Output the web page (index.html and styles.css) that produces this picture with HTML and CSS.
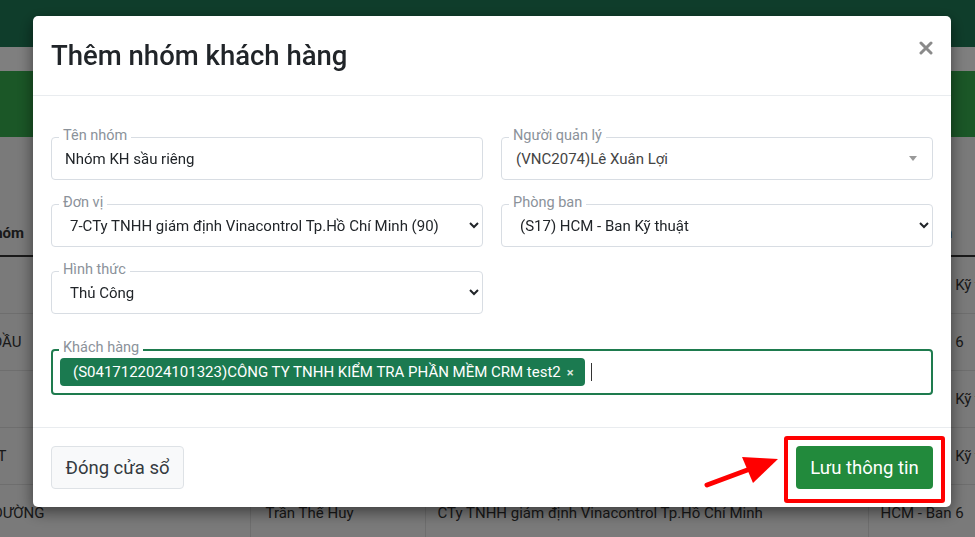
FILE: index.html
```html
<!DOCTYPE html>
<html lang="vi">
<head>
    <meta charset="UTF-8">
    <meta name="viewport" content="width=device-width, initial-scale=1.0">
    <title>Nhóm khách hàng</title>
    <link rel="stylesheet" href="styles.css">
</head>
<body>
    <div class="page">
        <div class="topbar"></div>
        <div class="strip"></div>
        <div class="banner"></div>
        <div class="list">
            <table class="grid">
                <colgroup>
                    <col class="c1"><col class="c2"><col class="c3"><col class="c4">
                </colgroup>
                <thead>
                    <tr><th class="name">Tên nhóm</th><th>Người quản lý</th><th>Đơn vị</th><th>Phòng ban</th></tr>
                </thead>
                <tbody>
                    <tr><td class="name"></td><td>Lê Xuân Lợi</td><td>CTy TNHH giám định Vinacontrol Tp.Hồ Chí Minh</td><td>HCM - Ban Kỹ thuật</td></tr>
                    <tr><td class="name mid">NHÓM SẦU RIÊNG ĐẦU</td><td>Trần Thế Huy</td><td>CTy TNHH giám định Vinacontrol Tp.Hồ Chí Minh</td><td>HCM - Ban 6</td></tr>
                    <tr><td class="name"></td><td>Lê Xuân Lợi</td><td>CTy TNHH giám định Vinacontrol Tp.Hồ Chí Minh</td><td>HCM - Ban Kỹ thuật</td></tr>
                    <tr><td class="name short">NHÓM KH THÂN THIẾT</td><td>Lê Xuân Lợi</td><td>CTy TNHH giám định Vinacontrol Tp.Hồ Chí Minh</td><td>HCM - Ban Kỹ thuật</td></tr>
                    <tr><td class="name long">NHÓM KH MẶT ĐƯỜNG</td><td>Trần Thế Huy</td><td>CTy TNHH giám định Vinacontrol Tp.Hồ Chí Minh</td><td>HCM - Ban 6</td></tr>
                </tbody>
            </table>
        </div>
    </div>

    <div class="backdrop">
        <div class="modal">
            <div class="modal-header">
                <h2>Thêm nhóm khách hàng</h2>
                <button class="close" type="button">
                    <svg width="14" height="14" viewBox="0 0 14 14"><path d="M2 2L12 12M12 2L2 12" stroke="#8a8a8a" stroke-width="3" stroke-linecap="round"/></svg>
                </button>
            </div>

            <div class="modal-body">
                <div class="form-grid">
                    <div class="field">
                        <label>Tên nhóm</label>
                        <input class="control" type="text" value="Nhóm KH sầu riêng">
                    </div>
                    <div class="field">
                        <label>Người quản lý</label>
                        <div class="control combo">
                            <span>(VNC2074)Lê Xuân Lợi</span>
                            <b class="combo-arrow"></b>
                        </div>
                    </div>
                    <div class="field">
                        <label>Đơn vị</label>
                        <select class="control">
                            <option>7-CTy TNHH giám định Vinacontrol Tp.Hồ Chí Minh (90)</option>
                        </select>
                    </div>
                    <div class="field">
                        <label>Phòng ban</label>
                        <select class="control">
                            <option>(S17) HCM - Ban Kỹ thuật</option>
                        </select>
                    </div>
                    <div class="field">
                        <label>Hình thức</label>
                        <select class="control">
                            <option>Thủ Công</option>
                        </select>
                    </div>
                    <div></div>
                    <div class="field wide">
                        <label>Khách hàng</label>
                        <div class="tag-box">
                            <span class="tag">(S0417122024101323)CÔNG TY TNHH KIỂM TRA PHẦN MỀM CRM test2 <i>×</i></span>
                            <span class="cursor"></span>
                        </div>
                    </div>
                </div>
            </div>

            <div class="modal-footer">
                <button class="btn btn-light" type="button">Đóng cửa sổ</button>
                <button class="btn btn-save" type="button">Lưu thông tin</button>
                <!-- chú thích hướng dẫn -->
                <div class="mark"></div>
                <svg class="pointer" width="90" height="45" viewBox="0 0 90 45">
                    <path d="M7 35L50 19" stroke="#f00" stroke-width="5" stroke-linecap="round"/>
                    <polygon points="78,9 42,7 53,33" fill="#f00"/>
                </svg>
            </div>
        </div>
    </div>
</body>
</html>
```

FILE: styles.css
```css
body {
    margin: 0;
    font-family: Roboto, "Liberation Sans", sans-serif;
    background: #f4f4f4;
    overflow: hidden;
}
.topbar {
    height: 47px;
    background: #1f7b57;
}
.strip {
    height: 24px;
    background: #ffffff;
}
.banner {
    height: 66px;
    background: #36ae4e;
}
.list {
    padding-top: 73px;
    overflow: hidden;
}
.grid {
    width: 1168px;
    table-layout: fixed;
    border-collapse: collapse;
    font-size: 15px;
    color: #333;
}
.grid .c1 { width: 250px; }
.grid .c2 { width: 175px; }
.grid .c3 { width: 443px; }
.grid .c4 { width: 300px; }
.grid th {
    height: 45px;
    text-align: left;
    font-weight: 700;
    padding: 0 12px;
    border-bottom: 2px solid #333;
    white-space: nowrap;
}
.grid td {
    height: 56px;
    padding: 0 12px;
    border-bottom: 1px solid #dcdcdc;
    border-left: 1px solid #dcdcdc;
    white-space: nowrap;
    overflow: hidden;
}
.grid td:nth-child(2) { padding-left: 15px; }
/* cột đầu bị cuộn ngang, chỉ thấy đuôi chữ */
.grid .name {
    direction: rtl;
    text-align: right;
    padding-left: 0;
    padding-right: 226px;
    border-left: none;
}
.grid td.mid { padding-right: 228px; }
.grid td.short { padding-right: 243px; }
.grid td.long { padding-right: 205px; }

.backdrop {
    position: fixed;
    top: 0;
    left: 0;
    right: 0;
    bottom: 0;
    background: rgba(0, 0, 0, 0.5);
    padding: 16px 0 0 33px;
}
.modal {
    width: 918px;
    height: 491px;
    background: #fff;
    border-radius: 5px;
    box-shadow: 0 5px 15px rgba(0, 0, 0, 0.5);
    display: flex;
    flex-direction: column;
}
.modal-header {
    height: 80px;
    box-sizing: border-box;
    border-bottom: 1px solid #e9ecef;
    padding: 0 18px;
    display: flex;
    align-items: center;
    justify-content: space-between;
}
.modal-header h2 {
    margin: 0;
    font-size: 27.5px;
    font-weight: 500;
    color: #212529;
}
.close {
    align-self: flex-start;
    margin-top: 25px;
    padding: 0;
    border: none;
    background: none;
    width: 14px;
    height: 14px;
    cursor: pointer;
}
.close svg { display: block; }

.modal-body {
    flex: 1;
    padding: 41px 18px 0;
}
.form-grid {
    display: grid;
    grid-template-columns: 1fr 1fr;
    column-gap: 18px;
    row-gap: 24px;
}
.field {
    position: relative;
}
.field.wide {
    grid-column: 1 / 3;
    margin-top: 11px;
}
.field label {
    position: absolute;
    left: 8px;
    top: -10px;
    padding: 0 4px;
    background: #fff;
    font-size: 14.5px;
    line-height: 18px;
    color: #8b929a;
}
.control {
    display: block;
    width: 100%;
    height: 43px;
    box-sizing: border-box;
    border: 1px solid #d8dde3;
    border-radius: 4px;
    background: #fff;
    font-family: Roboto, "Liberation Sans", sans-serif;
    font-size: 15px;
    color: #212529;
    padding: 0 13px;
    outline: none;
}
select.control {
    padding: 0 10px 0 14px;
}
.combo {
    display: flex;
    align-items: center;
    justify-content: space-between;
    color: #444;
    padding: 0 15px 0 14px;
}
.combo-arrow {
    border-top: 5px solid #999;
    border-left: 4px solid transparent;
    border-right: 4px solid transparent;
}
.tag-box {
    height: 46px;
    box-sizing: border-box;
    border: 2px solid #1e7b4e;
    border-radius: 4px;
    padding: 0 7px;
    display: flex;
    align-items: center;
    gap: 6px;
}
.tag {
    height: 28px;
    box-sizing: border-box;
    background: #1b7a50;
    color: #fff;
    border-radius: 4px;
    font-size: 15px;
    display: flex;
    align-items: center;
    padding: 0 11px 0 13px;
    gap: 6px;
    white-space: nowrap;
}
.tag i {
    font-style: normal;
    font-weight: 700;
    font-size: 13px;
    color: #d8e8df;
}
.cursor {
    width: 1px;
    height: 18px;
    background: #333;
}

.modal-footer {
    height: 80px;
    box-sizing: border-box;
    border-top: 1px solid #e9ecef;
    padding: 0 18px;
    display: flex;
    align-items: center;
    justify-content: space-between;
    position: relative;
}
.btn {
    height: 43px;
    border-radius: 4px;
    font-family: Roboto, "Liberation Sans", sans-serif;
    font-size: 18.5px;
    cursor: pointer;
    padding: 0;
}
.btn-light {
    width: 133px;
    background: #f8f9fa;
    border: 1px solid #dee2e6;
    color: #343a40;
}
.btn-save {
    width: 137px;
    background: #228a3c;
    border: none;
    color: #fff;
}
.mark {
    position: absolute;
    left: 751px;
    top: 8px;
    width: 161px;
    height: 67px;
    box-sizing: border-box;
    border: 4px solid #ff0000;
    border-radius: 3px;
    pointer-events: none;
}
.pointer {
    position: absolute;
    left: 667px;
    top: 22px;
}
```
